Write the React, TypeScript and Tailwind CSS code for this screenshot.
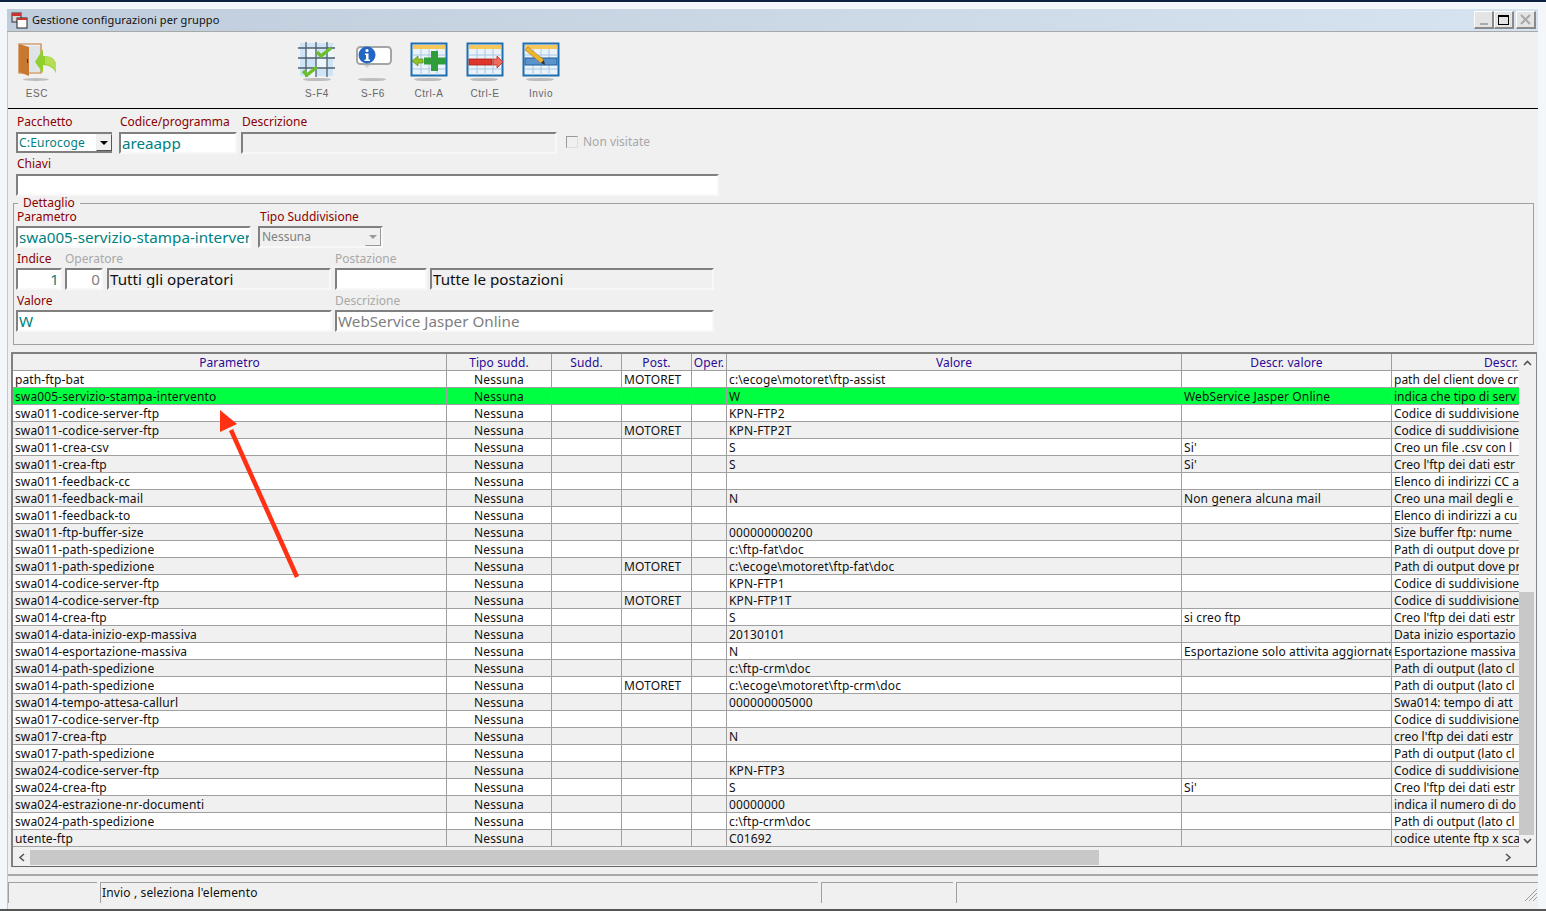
import React from 'react';

type Row = [string, string, string, string, string, string];

const rows: Row[] = [
  ['path-ftp-bat', 'MOTORET', '', 'c:\\ecoge\\motoret\\ftp-assist', '', 'path del client dove cr'],
  ['swa005-servizio-stampa-intervento', '', '', 'W', 'WebService Jasper Online', 'indica che tipo di serv'],
  ['swa011-codice-server-ftp', '', '', 'KPN-FTP2', '', 'Codice di suddivisione'],
  ['swa011-codice-server-ftp', 'MOTORET', '', 'KPN-FTP2T', '', 'Codice di suddivisione'],
  ['swa011-crea-csv', '', '', 'S', "Si'", 'Creo un file .csv con l'],
  ['swa011-crea-ftp', '', '', 'S', "Si'", "Creo l'ftp dei dati estr"],
  ['swa011-feedback-cc', '', '', '', '', 'Elenco di indirizzi CC a'],
  ['swa011-feedback-mail', '', '', 'N', 'Non genera alcuna mail', 'Creo una mail degli e'],
  ['swa011-feedback-to', '', '', '', '', 'Elenco di indirizzi a cu'],
  ['swa011-ftp-buffer-size', '', '', '000000000200', '', 'Size buffer ftp: nume'],
  ['swa011-path-spedizione', '', '', 'c:\\ftp-fat\\doc', '', 'Path di output dove pr'],
  ['swa011-path-spedizione', 'MOTORET', '', 'c:\\ecoge\\motoret\\ftp-fat\\doc', '', 'Path di output dove pr'],
  ['swa014-codice-server-ftp', '', '', 'KPN-FTP1', '', 'Codice di suddivisione'],
  ['swa014-codice-server-ftp', 'MOTORET', '', 'KPN-FTP1T', '', 'Codice di suddivisione'],
  ['swa014-crea-ftp', '', '', 'S', 'si creo ftp', "Creo l'ftp dei dati estr"],
  ['swa014-data-inizio-exp-massiva', '', '', '20130101', '', 'Data inizio esportazio'],
  ['swa014-esportazione-massiva', '', '', 'N', 'Esportazione solo attivita aggiornate', 'Esportazione massiva'],
  ['swa014-path-spedizione', '', '', 'c:\\ftp-crm\\doc', '', 'Path di output (lato cl'],
  ['swa014-path-spedizione', 'MOTORET', '', 'c:\\ecoge\\motoret\\ftp-crm\\doc', '', 'Path di output (lato cl'],
  ['swa014-tempo-attesa-callurl', '', '', '000000005000', '', 'Swa014: tempo di att'],
  ['swa017-codice-server-ftp', '', '', '', '', 'Codice di suddivisione'],
  ['swa017-crea-ftp', '', '', 'N', '', "creo l'ftp dei dati estr"],
  ['swa017-path-spedizione', '', '', '', '', 'Path di output (lato cl'],
  ['swa024-codice-server-ftp', '', '', 'KPN-FTP3', '', 'Codice di suddivisione'],
  ['swa024-crea-ftp', '', '', 'S', "Si'", "Creo l'ftp dei dati estr"],
  ['swa024-estrazione-nr-documenti', '', '', '00000000', '', 'indica il numero di do'],
  ['swa024-path-spedizione', '', '', 'c:\\ftp-crm\\doc', '', 'Path di output (lato cl'],
  ['utente-ftp', '', '', 'C01692', '', 'codice utente ftp x sca'],
];

const inset = 'border-2 border-t-[#808080] border-l-[#808080] border-r-[#f8f8f8] border-b-[#f8f8f8]';
const labelCls = 'text-[12px] leading-[14px] text-[#8b0000]';
const mutedCls = 'text-[12px] leading-[14px] text-[#a8a8a8]';
const cell = 'shrink-0 h-full border-r border-[#a0a0a0] whitespace-nowrap overflow-hidden px-[2px]';

const TableBase = () => (
  <>
    <rect x="1.500" y="1.500" width="35" height="32" fill="#eaf3fb" stroke="#1f6fb0" strokeWidth="2" />
    <rect x="3" y="3" width="32" height="4" fill="#f5c65a" />
    <path d="M3 13h32M3 20h32M3 27h32M11 7v26M19 7v26M27 7v26" stroke="#a9c6e0" strokeWidth="1" />
  </>
);

const Shadow = ({ cx = 18 }: { cx?: number }) => <ellipse cx={cx} cy="37.500" rx="14" ry="1.600" fill="#bdbdbd" />;

const EscIcon = () => (
  <svg width="42" height="42" viewBox="0 0 42 42">
    <path d="M3 2h22v29H3z" fill="#eef1f3" stroke="#c47a35" strokeWidth="1.200" />
    <path d="M12 4h12v26H12z" fill="#dfe4e8" />
    <path d="M3 2l10 3v29L3 30z" fill="#c9782f" />
    <path d="M11 17h1v4h-1z" fill="#5a3313" />
    <path d="M19 20l8-13v7c7 0 12 2 13 8v9c-2-5-7-8-13-8v8z" fill="#8fd02c" />
    <path d="M29 14c6 0 10 3 11 8v8c-2-5-6-7-11-8z" fill="#b6de55" />
    <ellipse cx="20" cy="37.500" rx="13" ry="1.500" fill="#bdbdbd" />
  </svg>
);

const GridIcon = () => (
  <svg width="38" height="42" viewBox="0 0 38 42">
    <rect x="2" y="1" width="33" height="33" fill="#cfe4f7" />
    <path d="M8 6h10v10H8zM18 16h11v10H18zM8 26h10v8H8zM29 6h6v10h-6z" fill="#eef6fd" />
    <path d="M0 6h37M0 16h37M0 26h37M8 0v35M18 0v35M29 0v35" stroke="#4f5f6b" strokeWidth="1.300" />
    <path d="M19 10l4 4 10-8" fill="none" stroke="#6cbf2c" strokeWidth="3.500" />
    <path d="M5 29l4 4 10-8" fill="none" stroke="#6cbf2c" strokeWidth="3.500" />
    <Shadow cx={19} />
  </svg>
);

const InfoIcon = () => (
  <svg width="38" height="42" viewBox="0 0 38 42">
    <rect x="3" y="5" width="34" height="17" rx="3.500" fill="#fff" stroke="#a5a5a5" strokeWidth="2" />
    <path d="M10 23h6l-3 3z" fill="#d0d0d0" />
    <circle cx="13" cy="13" r="8.500" fill="#2367c4" />
    <circle cx="13" cy="8.500" r="1.600" fill="#fff" />
    <path d="M11 11.500h3.500v6H16V19h-5.500v-1.500H12v-4.500h-1z" fill="#fff" />
    <Shadow />
  </svg>
);

const AddIcon = () => (
  <svg width="38" height="42" viewBox="0 0 38 42">
    <TableBase />
    <path d="M21 9h7v6.500h8v7h-8V29h-7v-6.500h-7v-7h7z" fill="#2f9d3a" />
    <path d="M2 19l6-5v3h5v4H8v3z" fill="#8fc31f" stroke="#4d7a10" strokeWidth=".6" />
    <Shadow />
  </svg>
);

const RemoveIcon = () => (
  <svg width="38" height="42" viewBox="0 0 38 42">
    <TableBase />
    <rect x="3" y="17" width="23" height="6" fill="#e0352b" stroke="#a81d16" strokeWidth=".8" />
    <path d="M27 17h4v-3l6 6-6 6v-3h-4z" fill="#ef6a5f" stroke="#c22a20" strokeWidth=".8" />
    <Shadow />
  </svg>
);

const EditIcon = () => (
  <svg width="38" height="42" viewBox="0 0 38 42">
    <TableBase />
    <rect x="3" y="16" width="32" height="7" fill="#5b93cc" stroke="#1f5f9f" strokeWidth="1" />
    <path d="M3 8l3-3 16 13-3 3z" fill="#f0b52d" stroke="#a8741a" strokeWidth=".6" />
    <path d="M19 21l3-3 1 5z" fill="#333" />
    <Shadow />
  </svg>
);

const tools: { key: string; icon: React.ReactNode }[] = [
  { key: 'S-F4', icon: <GridIcon /> },
  { key: 'S-F6', icon: <InfoIcon /> },
  { key: 'Ctrl-A', icon: <AddIcon /> },
  { key: 'Ctrl-E', icon: <RemoveIcon /> },
  { key: 'Invio', icon: <EditIcon /> },
];

const ToolButton = ({ label, icon }: { label: string; icon: React.ReactNode }) => (
  <div className="flex w-[56px] flex-col items-center">
    <div className="h-[42px] blur-[0.3px]">{icon}</div>
    <span className="mt-[4px] font-['Liberation_Sans',sans-serif] text-[10px] leading-[12px] tracking-[0.6px] text-[#666]">{label}</span>
  </div>
);

const Field = ({
  w,
  gray,
  right,
  className,
  children,
}: {
  w: string;
  gray?: boolean;
  right?: boolean;
  className?: string;
  children?: React.ReactNode;
}) => (
  <div
    className={`${w} ${inset} ${gray ? 'bg-[#f0f0f0]' : 'bg-white'} ${right ? 'justify-end' : ''} ${className ?? 'text-[#008080]'} flex h-[22px] shrink-0 items-center overflow-hidden whitespace-nowrap pl-[1px] pr-[1px] text-[15.2px] leading-[20px]`}
  >
    {children}
  </div>
);

const ColHeader = ({ w, children }: { w: string; children: React.ReactNode }) => (
  <div className={`${w} shrink-0 h-full border-r border-[#a0a0a0] text-center whitespace-nowrap overflow-hidden`}>{children}</div>
);

export default function App() {
  return (
    <div className="relative flex h-[911px] w-[1546px] flex-col overflow-hidden bg-[#f3f7fc] font-['Noto_Sans',sans-serif] text-[12px] text-black">
      <div className="h-[2px] bg-[#0a2240]" />
      <div className="ml-[7px] mr-[8px] mt-[7px] flex h-[900px] flex-col">
        {/* barra titolo */}
        <div className="flex h-[23px] items-center justify-between border-b border-[#a8a8a8] bg-gradient-to-r from-[#bfcddc] to-[#d6e3f0] pl-[4px] pr-[2px]">
          <div className="flex items-center gap-[4px]">
            <svg width="17" height="17" viewBox="0 0 17 17">
              <rect x="1" y="1" width="9" height="9" fill="#d8d8d8" stroke="#333" />
              <rect x="1" y="1" width="9" height="3" fill="#c33" />
              <rect x="6" y="6" width="10" height="10" fill="#fff" stroke="#222" />
              <rect x="6" y="6" width="10" height="2" fill="#c33" />
            </svg>
            <span className="text-[11px] leading-[16px] tracking-[0.1px] text-[#111]">Gestione configurazioni per gruppo</span>
          </div>
          <div className="flex items-center">
            <div className="flex h-[18px] w-[20px] items-end justify-center border-b-2 border-l border-r-2 border-t border-b-[#8a8a8a] border-l-white border-r-[#8a8a8a] border-t-white bg-[#e4e4e4] pb-[2px]">
              <div className="h-[2px] w-[8px] bg-[#aaa]" />
            </div>
            <div className="flex h-[18px] w-[20px] items-center justify-center border-b-2 border-l border-r-2 border-t border-b-[#8a8a8a] border-l-white border-r-[#8a8a8a] border-t-white bg-[#e4e4e4]">
              <div className="h-[10px] w-[11px] border border-t-[2px] border-black" />
            </div>
            <div className="ml-[2px] flex h-[18px] w-[20px] items-center justify-center border-b-2 border-l border-r-2 border-t border-b-[#8a8a8a] border-l-white border-r-[#8a8a8a] border-t-white bg-[#e4e4e4]">
              <svg width="11" height="11" viewBox="0 0 11 11">
                <path d="M1 1l9 9M10 1l-9 9" stroke="#a8a8a8" strokeWidth="2" />
              </svg>
            </div>
          </div>
        </div>

        <div className="flex flex-1 flex-col border-l border-[#c8c8c8] bg-[#f0f0f0]">
          {/* toolbar */}
          <div className="flex h-[77px] border-b border-black pl-[1px] pt-[10px]">
            <ToolButton label="ESC" icon={<EscIcon />} />
            <div className="ml-[224px] flex">
              {tools.map(t => (
                <ToolButton key={t.key} label={t.key} icon={t.icon} />
              ))}
            </div>
          </div>

          {/* filtri */}
          <div className="flex flex-col pl-[8px] pt-[6px]">
            <div className="flex h-[14px]">
              <span className={`${labelCls} ml-[1px] w-[103px]`}>Pacchetto</span>
              <span className={`${labelCls} w-[122px]`}>Codice/programma</span>
              <span className={labelCls}>Descrizione</span>
            </div>
            <div className="mt-[3px] flex h-[22px]">
              <div className="flex h-[21px] w-[96px] items-center justify-between overflow-hidden border-2 border-r-0 border-b-[#808080] border-l-[#808080] border-t-[#808080] bg-white pl-[1px] text-[12px] tracking-[0.2px] text-[#008080]">
                <span>C:Eurocoge</span>
                <div className="flex h-[17px] w-[16px] items-center justify-center border border-b-[#555] border-l-[#eee] border-r-[#555] border-t-[#eee] bg-[#f0f0f0]">
                  <div className="h-0 w-0 border-x-[4px] border-t-[4px] border-x-transparent border-t-black" />
                </div>
              </div>
              <Field w="w-[118px] ml-[7px]">areaapp</Field>
              <Field w="w-[316px] ml-[4px]" gray />
              <div className="ml-[9px] mt-[3px] flex h-[14px] items-center gap-[5px]">
                <div className="h-[12px] w-[12px] border border-b-[#ddd] border-l-[#999] border-r-[#ddd] border-t-[#999] bg-[#f0f0f0]" />
                <span className={mutedCls}>Non visitate</span>
              </div>
            </div>
            <span className={`${labelCls} ml-[1px] mt-[3px]`}>Chiavi</span>
            <Field w="w-[703px] mt-[3px]" />
          </div>

          {/* dettaglio */}
          <div className="relative ml-[5px] mr-[4px] mt-[7px] h-[142px] border border-[#a0a0a0] pl-[2px]">
            <span className={`${labelCls} absolute left-[4px] top-[-8px] bg-[#f0f0f0] px-[5px]`}>Dettaglio</span>
            <div className="mt-[6px] flex h-[14px]">
              <span className={`${labelCls} ml-[1px] w-[243px]`}>Parametro</span>
              <span className={labelCls}>Tipo Suddivisione</span>
            </div>
            <div className="mt-[2px] flex">
              <Field w="w-[235px]">swa005-servizio-stampa-interver</Field>
              <div className={`${inset} ml-[7px] flex h-[22px] w-[125px] items-center justify-between bg-[#f0f0f0] pl-[2px] text-[12px] text-[#808080]`}>
                <span>Nessuna</span>
                <div className="flex h-[18px] w-[16px] items-center justify-center border border-b-[#999] border-l-[#eee] border-r-[#999] border-t-[#eee]">
                  <div className="h-0 w-0 border-x-[4px] border-t-[4px] border-x-transparent border-t-[#999]" />
                </div>
              </div>
            </div>
            <div className="mt-[4px] flex h-[14px]">
              <span className={`${labelCls} ml-[1px] w-[48px]`}>Indice</span>
              <span className={`${mutedCls} w-[270px]`}>Operatore</span>
              <span className={mutedCls}>Postazione</span>
            </div>
            <div className="mt-[2px] flex">
              <Field w="w-[46px]" right>1</Field>
              <Field w="w-[38px] ml-[3px]" right className="text-[#808080]">0</Field>
              <Field w="w-[224px] ml-[4px]" gray className="text-[#111]">Tutti gli operatori</Field>
              <Field w="w-[92px] ml-[4px]" />
              <Field w="w-[284px] ml-[3px]" gray className="text-[#111]">Tutte le postazioni</Field>
            </div>
            <div className="mt-[4px] flex h-[14px]">
              <span className={`${labelCls} ml-[1px] w-[318px]`}>Valore</span>
              <span className={mutedCls}>Descrizione</span>
            </div>
            <div className="mt-[2px] flex">
              <Field w="w-[316px]">W</Field>
              <Field w="w-[379px] ml-[3px]" className="text-[#808080]">WebService Jasper Online</Field>
            </div>
          </div>

          {/* griglia */}
          <div className="ml-[3px] mr-[1px] mt-[7px] flex h-[515px] flex-col border-2 border-b border-r border-[#808080] border-b-[#666] border-r-[#888] bg-[#f0f0f0]">
            <div className="flex min-h-0 flex-1">
              <div className="flex min-w-0 flex-1 flex-col overflow-hidden">
                <div className="flex h-[17px] shrink-0 border-b border-[#a0a0a0] leading-[18px] tracking-[0.1px] text-[#2a0a96]">
                  <ColHeader w="w-[434px]">Parametro</ColHeader>
                  <ColHeader w="w-[105px]">Tipo sudd.</ColHeader>
                  <ColHeader w="w-[70px]">Sudd.</ColHeader>
                  <ColHeader w="w-[70px]">Post.</ColHeader>
                  <ColHeader w="w-[35px]">Oper.</ColHeader>
                  <ColHeader w="w-[455px]">Valore</ColHeader>
                  <ColHeader w="w-[210px]">Descr. valore</ColHeader>
                  <div className="w-[280px] shrink-0 whitespace-nowrap pl-[92px]">Descr.</div>
                </div>
                {rows.map((r, i) => {
                  const bg = i === 1 ? 'bg-[#00ff40]' : i % 2 === 0 ? 'bg-white' : 'bg-[#f0f0f0]';
                  return (
                    <div key={i} className={`${bg} flex h-[17px] shrink-0 border-b border-[#a0a0a0] leading-[18px] tracking-[0.12px] text-[#111]`}>
                      <div className={`${cell} w-[434px]`}>{r[0]}</div>
                      <div className={`${cell} w-[105px] text-center`}>Nessuna</div>
                      <div className={`${cell} w-[70px]`} />
                      <div className={`${cell} w-[70px]`}>{r[1]}</div>
                      <div className={`${cell} w-[35px]`}>{r[2]}</div>
                      <div className={`${cell} w-[455px]`}>{r[3]}</div>
                      <div className={`${cell} w-[210px]`}>{r[4]}</div>
                      <div className="h-full w-[280px] shrink-0 whitespace-nowrap px-[2px] tracking-normal">{r[5]}</div>
                    </div>
                  );
                })}
              </div>
              {/* scrollbar verticale */}
              <div className="flex w-[17px] shrink-0 flex-col items-center bg-[#f0f0f0]">
                <svg width="9" height="6" viewBox="0 0 9 6" className="mt-[6px]">
                  <path d="M1 5l3.500-3.500L8 5" fill="none" stroke="#555" strokeWidth="1.600" />
                </svg>
                <div className="mt-[226px] h-[243px] w-[15px] self-start bg-[#c8c8c8]" />
                <svg width="9" height="6" viewBox="0 0 9 6" className="mt-[3px]">
                  <path d="M1 1l3.500 3.500L8 1" fill="none" stroke="#555" strokeWidth="1.600" />
                </svg>
              </div>
            </div>
            {/* scrollbar orizzontale */}
            <div className="flex h-[17px] shrink-0 items-center bg-[#f0f0f0]">
              <svg width="17" height="9" viewBox="0 0 17 9" className="shrink-0">
                <path d="M11 1L7 4.500 11 8" fill="none" stroke="#555" strokeWidth="1.600" />
              </svg>
              <div className="h-[15px] w-[1069px] bg-[#c8c8c8]" />
              <svg width="9" height="9" viewBox="0 0 9 9" className="ml-[405px] shrink-0">
                <path d="M2 1l4 3.500L2 8" fill="none" stroke="#555" strokeWidth="1.600" />
              </svg>
            </div>
          </div>

          {/* status bar */}
          <div className="mt-[7px] border-t-2 border-[#a8a8a8] pt-[6px]">
            <div className="relative flex h-[21px] text-[12px] leading-[20px] tracking-[0.14px] text-[#111]">
              <div className="w-[89px] border-l border-t border-[#a0a0a0]" />
              <div className="ml-[3px] w-[718px] border-l border-t border-[#a0a0a0] pl-[1px]">Invio , seleziona l'elemento</div>
              <div className="ml-[3px] w-[132px] border-l border-t border-[#a0a0a0]" />
              <div className="ml-[3px] flex-1 border-l border-t border-[#a0a0a0]" />
              <svg width="14" height="14" viewBox="0 0 14 14" className="absolute bottom-[1px] right-0">
                <path d="M13 1L1 13M13 5l-8 8M13 9l-4 4" stroke="#9a9a9a" strokeWidth="1" />
              </svg>
            </div>
          </div>
        </div>
      </div>
      <div className="absolute bottom-0 left-0 h-[2px] w-full bg-[#555]" />

      {/* freccia di annotazione */}
      <svg width="110" height="190" viewBox="0 0 110 190" className="absolute left-[210px] top-[400px]">
        <path d="M87 177L21 30" stroke="#ff3014" strokeWidth="4.500" fill="none" />
        <path d="M10 10L27 24 10 32z" fill="#ff3014" />
      </svg>
    </div>
  );
}
